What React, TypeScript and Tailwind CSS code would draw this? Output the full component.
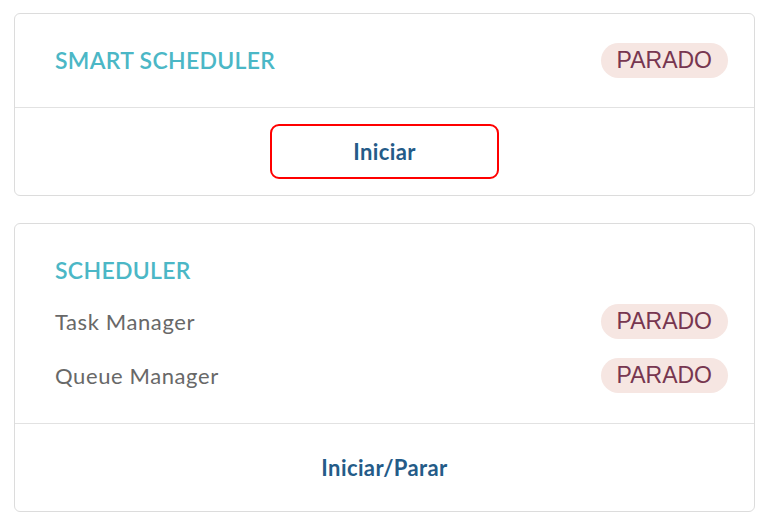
import React from 'react';

const Badge: React.FC<{ label: string }> = ({ label }) => (
  <span className="inline-flex h-[35px] items-center rounded-full bg-[#f6e6e2] px-[16px] font-['Liberation_Sans',Arial,sans-serif] text-[23px] leading-none text-[#773650]">
    {label}
  </span>
);

const rows = ['Task Manager', 'Queue Manager'];

export default function App() {
  return (
    <div className="min-h-[521px] w-[768px] bg-white px-[14px] pt-[13px] font-['Lato','Open_Sans',sans-serif]">
      <section className="w-[741px] rounded-[6px] border border-[#dcdcdc]">
        <div className="flex h-[94px] items-center justify-between border-b border-[#e2e2e2] pl-[40px] pr-[26px]">
          <h2 className="text-[23px] font-semibold tracking-[0.3px] text-[#4bb7c6]">SMART SCHEDULER</h2>
          <Badge label="PARADO" />
        </div>
        <div className="flex h-[87px] items-center justify-center">
          <button className="h-[55px] w-[229px] rounded-[9px] border-2 border-[#f00] text-[22px] font-bold tracking-[0.4px] text-[#245b88]">
            Iniciar
          </button>
        </div>
      </section>

      <section className="mt-[27px] w-[741px] rounded-[6px] border border-[#dcdcdc]">
        <div className="h-[200px] border-b border-[#e2e2e2] pl-[40px] pr-[26px] pt-[32px]">
          <h2 className="text-[23px] font-semibold leading-[28px] tracking-[0.3px] text-[#4bb7c6]">SCHEDULER</h2>
          <div className="mt-[20px] flex flex-col gap-[19px]">
            {rows.map((r) => (
              <div key={r} className="flex h-[35px] items-center justify-between">
                <span className="text-[22px] tracking-[0.6px] text-[#686868]">{r}</span>
                <Badge label="PARADO" />
              </div>
            ))}
          </div>
        </div>
        <div className="flex h-[87px] items-center justify-center">
          <button className="text-[22px] font-bold tracking-[0.4px] text-[#245b88]">Iniciar/Parar</button>
        </div>
      </section>
    </div>
  );
}
